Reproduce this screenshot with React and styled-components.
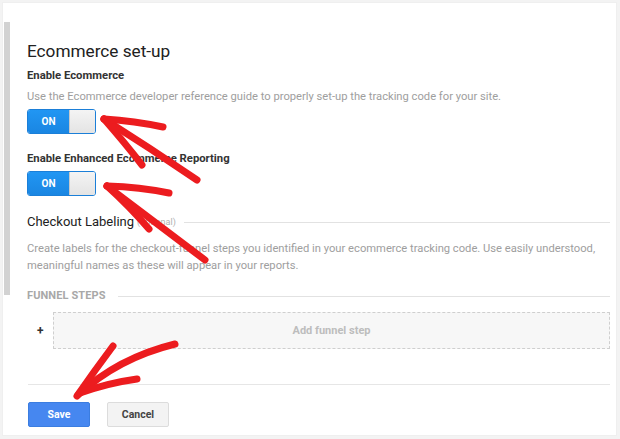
import React from "react";
import styled, { createGlobalStyle } from "styled-components";

const Global = createGlobalStyle`
  html, body { margin: 0; padding: 0; background: #f3f3f3; }
  body { font-family: Roboto, "Liberation Sans", Arial, sans-serif; }
  * { box-sizing: border-box; }
`;

const Page = styled.div`
  position: relative;
  width: 620px;
  height: 439px;
  padding: 2px 3px 3px 2px;
  overflow: hidden;
`;

const Card = styled.div`
  width: 615px;
  height: 434px;
  background: #fff;
  border: 1px solid #efefef;
  display: flex;
  flex-direction: column;
`;

const Body = styled.div`
  display: flex;
  align-items: flex-start;
`;

const Rail = styled.div`
  width: 6px;
  height: 273px;
  margin: 19px 0 0 1px;
  background: #d2d2d2;
  flex: none;
`;

const Content = styled.div`
  flex: 1;
  padding: 37px 6px 0 17px;
  display: flex;
  flex-direction: column;
`;

const Title = styled.h1`
  margin: 0;
  font-size: 17.2px;
  font-weight: 400;
  line-height: 22px;
  color: #212121;
`;

const Label = styled.div`
  margin-top: ${(p) => p.$mt || 0}px;
  font-size: 11.3px;
  font-weight: 700;
  line-height: 16px;
  color: #333;
`;

const Help = styled.p`
  margin: ${(p) => p.$mt || 0}px 0 0;
  font-size: 11.2px;
  line-height: 17px;
  color: #9e9e9e;
`;

const Toggle = styled.div`
  margin-top: ${(p) => p.$mt || 0}px;
  width: 69px;
  height: 25px;
  display: flex;
  border-radius: 3px;
  overflow: hidden;
  border: 1px solid #1b7fd8;
`;

const ToggleOn = styled.div`
  width: 41px;
  display: flex;
  align-items: center;
  justify-content: center;
  background: linear-gradient(#2196f3, #1a86e2);
  color: #fff;
  font-size: 10px;
  font-weight: 700;
`;

const Knob = styled.div`
  flex: 1;
  background: linear-gradient(#f4f4f4, #e4e4e4);
  border-left: 1px solid #c9c9c9;
`;

const SectionHead = styled.div`
  margin-top: ${(p) => p.$mt || 0}px;
  display: flex;
  align-items: center;
  gap: 8px;
`;

const SubTitle = styled.span`
  font-size: 13px;
  line-height: 20px;
  color: #212121;
`;

const Optional = styled.span`
  font-size: 9px;
  color: #b0b0b0;
  margin-left: -5px;
`;

const CapsTitle = styled.span`
  font-size: 11px;
  font-weight: 700;
  color: #a8a8a8;
  line-height: 16px;
  letter-spacing: 0.1px;
`;

const Rule = styled.div`
  flex: 1;
  height: 1px;
  margin-left: ${(p) => p.$ml || 0}px;
  background: #e2e2e2;
`;

const StepRow = styled.div`
  margin-top: 8px;
  display: flex;
  align-items: center;
`;

const Plus = styled.span`
  width: 26px;
  padding-left: 10px;
  font-size: 12px;
  font-weight: 700;
  color: #333;
`;

const AddStep = styled.div`
  flex: 1;
  height: 37px;
  border: 1px dashed #cfcfcf;
  background: #f7f7f7;
  display: flex;
  align-items: center;
  justify-content: center;
  font-size: 11px;
  font-weight: 700;
  color: #bdbdbd;
`;

const Footer = styled.div`
  margin: 35px 6px 0 25px;
  border-top: 1px solid #e6e6e6;
  padding-top: 17px;
  display: flex;
  gap: 17px;
`;

const Button = styled.button`
  width: 62px;
  height: 25px;
  border-radius: 2px;
  font-family: inherit;
  font-size: 10.5px;
  font-weight: 700;
  cursor: pointer;
  border: 1px solid ${(p) => (p.$primary ? "#3b7de0" : "#dcdcdc")};
  background: ${(p) => (p.$primary ? "#4687f0" : "#f3f3f3")};
  color: ${(p) => (p.$primary ? "#fff" : "#444")};
`;

const Overlay = styled.svg`
  position: absolute;
  inset: 0;
  pointer-events: none;
`;

function Switch({ mt }) {
  return (
    <Toggle $mt={mt}>
      <ToggleOn>ON</ToggleOn>
      <Knob />
    </Toggle>
  );
}

export default function App() {
  return (
    <>
      <Global />
      <Page>
        <Card>
          <Body>
            <Rail />
            <Content>
              <Title>Ecommerce set-up</Title>
              <Label $mt={6}>Enable Ecommerce</Label>
              <Help $mt={4}>
                Use the Ecommerce developer reference guide to properly set-up the tracking code for your site.
              </Help>
              <Switch mt={4} />
              <Label $mt={17}>Enable Enhanced Ecommerce Reporting</Label>
              <Switch mt={4} />
              <SectionHead $mt={16}>
                <SubTitle>Checkout Labeling</SubTitle>
                <Optional>(optional)</Optional>
                <Rule />
              </SectionHead>
              <Help $mt={8}>
                Create labels for the checkout-funnel steps you identified in your ecommerce tracking code. Use easily understood,
                meaningful names as these will appear in your reports.
              </Help>
              <SectionHead $mt={14}>
                <CapsTitle>FUNNEL STEPS</CapsTitle>
                <Rule $ml={4} />
              </SectionHead>
              <StepRow>
                <Plus>+</Plus>
                <AddStep>Add funnel step</AddStep>
              </StepRow>
            </Content>
          </Body>
          <Footer>
            <Button $primary>Save</Button>
            <Button>Cancel</Button>
          </Footer>
        </Card>
        <Overlay viewBox="0 0 620 439" width="620" height="439">
          <g fill="none" stroke="#ec1c1f" strokeWidth="7" strokeLinecap="round" strokeLinejoin="round">
            <path d="M197 180 Q150 148 104 119" />
            <path d="M104 119 Q135 121 163 127" />
            <path d="M104 119 Q125 143 142 165" />
            <path d="M205 260 Q155 222 107 186" />
            <path d="M107 186 Q140 187 169 193" />
            <path d="M107 186 Q130 207 149 229" />
            <path d="M175 344 Q118 358 78 395" />
            <path d="M113 346 Q95 370 77 396" />
            <path d="M137 379 Q108 383 80 393" />
          </g>
        </Overlay>
      </Page>
    </>
  );
}
